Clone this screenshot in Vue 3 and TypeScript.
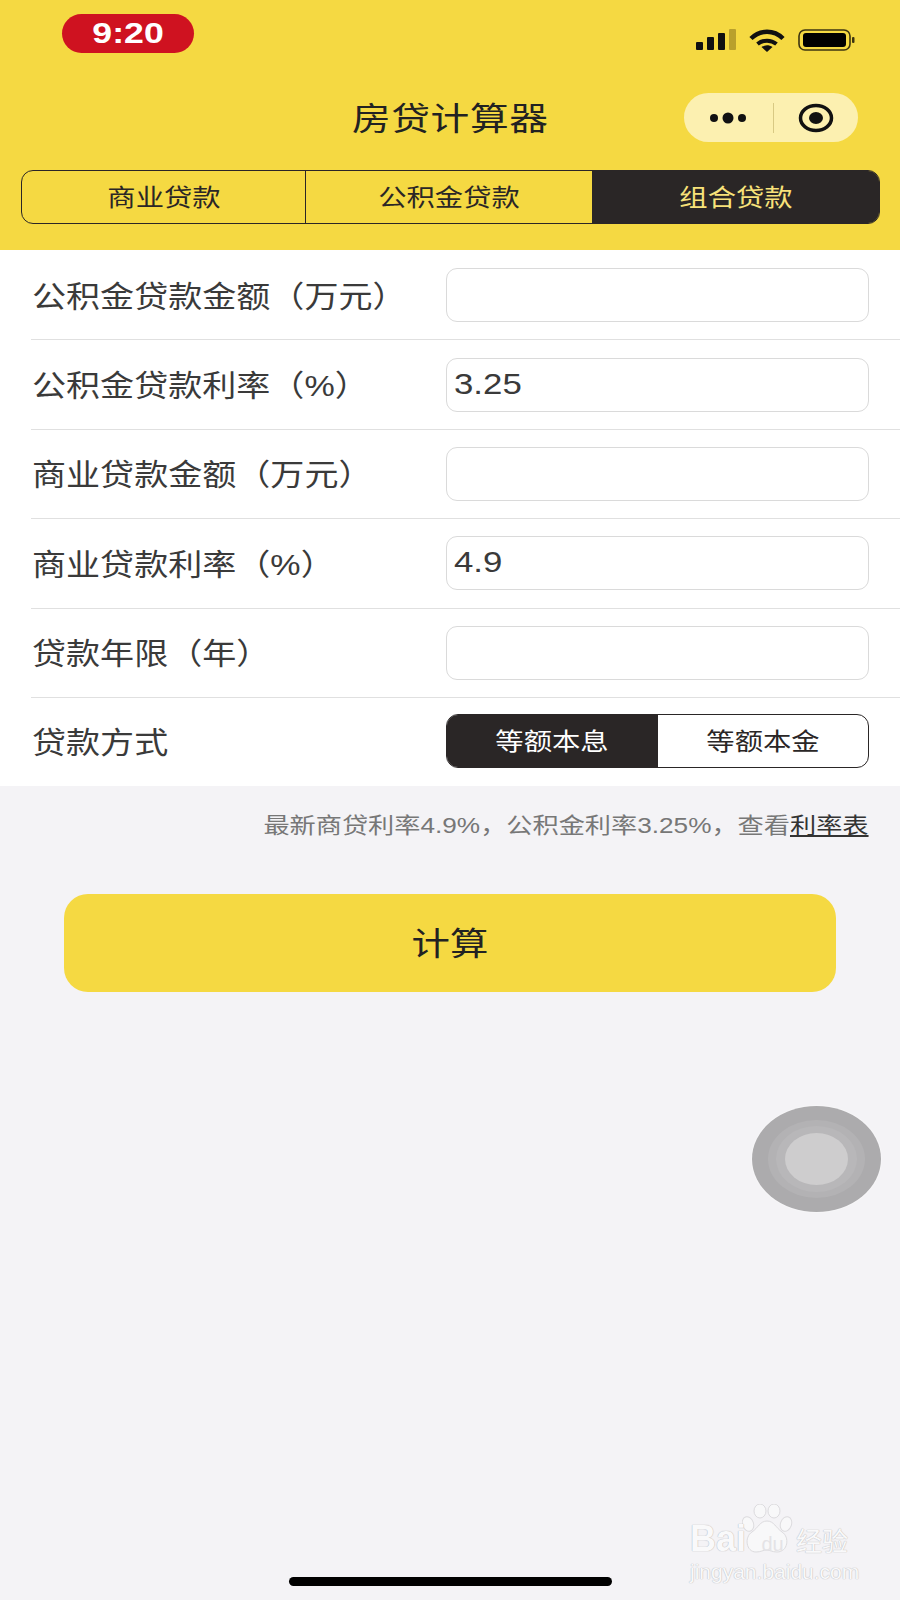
<template>
  <div class="page">
    <header class="head">
      <div class="status">
        <span class="time"><span class="wide mid">9:20</span></span>
        <div class="status-icons">
          <svg width="40" height="22" viewBox="0 0 40 22">
            <rect x="0" y="13" width="7" height="8" rx="1" fill="#111" />
            <rect x="11" y="8" width="7" height="13" rx="1" fill="#111" />
            <rect x="22" y="4" width="7" height="17" rx="1" fill="#111" />
            <rect x="33" y="0" width="7" height="21" rx="1" fill="#b9a02c" />
          </svg>
          <svg width="36" height="23" viewBox="0 0 36 23">
            <path d="M18 23 L0 8 C10 -2.500 26 -2.500 36 8 Z M18 23 L9 13 C14 8.500 22 8.500 27 13 Z" fill="none" />
            <path d="M2 9.500 C11 0.500 25 0.500 34 9.500" fill="none" stroke="#111" stroke-width="4.500" />
            <path d="M8.500 15 C14 10.500 22 10.500 27.500 15" fill="none" stroke="#111" stroke-width="4" />
            <path d="M12.500 18 C16 15.500 20 15.500 23.500 18 L18 23 Z" fill="#111" />
          </svg>
          <svg width="58" height="24" viewBox="0 0 58 24">
            <rect x="1" y="2" width="51" height="20" rx="6" fill="none" stroke="#3c3410" stroke-width="1.600" />
            <rect x="5" y="5" width="43" height="14" rx="3" fill="#000" />
            <rect x="54" y="9" width="2.500" height="6" rx="1" fill="#3c3410" />
          </svg>
        </div>
      </div>
      <div class="nav">
        <h1><span class="wide mid">房贷计算器</span></h1>
        <div class="capsule">
          <svg width="40" height="16" viewBox="0 0 40 16">
            <circle cx="6" cy="8" r="4" fill="#111" />
            <circle cx="20" cy="8" r="5.500" fill="#111" />
            <circle cx="34" cy="8" r="4" fill="#111" />
          </svg>
          <i class="sep"></i>
          <svg width="36" height="30" viewBox="0 0 36 30">
            <ellipse cx="18" cy="15" rx="15.500" ry="12.500" fill="none" stroke="#111" stroke-width="3.500" />
            <ellipse cx="18" cy="15" rx="7" ry="6" fill="#111" />
          </svg>
        </div>
      </div>
      <div class="tabs">
        <div v-for="t in tabs" :key="t" class="tab" :class="{ on: t === activeTab }">
          <span class="wide mid">{{ t }}</span>
        </div>
      </div>
    </header>

    <section class="form">
      <div v-for="r in rows" :key="r.label" class="row">
        <label><span class="wide">{{ r.label }}</span></label>
        <div class="field"><span class="wide">{{ r.value }}</span></div>
      </div>
      <div class="row last">
        <label><span class="wide">贷款方式</span></label>
        <div class="switch">
          <div class="opt on"><span class="wide mid">等额本息</span></div>
          <div class="opt"><span class="wide mid">等额本金</span></div>
        </div>
      </div>
    </section>

    <p class="note"><span class="wide end">最新商贷利率4.9%，公积金利率3.25%，查看<u>利率表</u></span></p>

    <button class="calc"><span class="wide mid">计算</span></button>

    <div class="float"><i class="r1"></i><i class="r2"></i><i class="r3"></i></div>

    <div class="mark">
      <svg class="paw" width="52" height="52" viewBox="0 0 52 52">
        <g fill="#f8f8f9" stroke="#dcdbde" stroke-width="1">
          <ellipse cx="6" cy="20" rx="5.500" ry="7.500" transform="rotate(-20 6 20)" />
          <ellipse cx="18" cy="7" rx="6" ry="7" />
          <ellipse cx="32" cy="7" rx="6" ry="7" />
          <ellipse cx="44" cy="20" rx="5.500" ry="7.500" transform="rotate(20 44 20)" />
          <path d="M25 17 C32 17 34 24 40 28 C48 33 46 48 35 48 C30 48 28 46 25 46 C21 46 19 48 14 48 C4 48 2 33 10 28 C16 24 18 17 25 17 Z" />
        </g>
      </svg>
      <div class="mark-top">
        <span>Bai</span><b>du</b><span class="cn">经验</span>
      </div>
      <div class="mark-url">jingyan.baidu.com</div>
    </div>
    <div class="home"></div>
  </div>
</template>

<script setup lang="ts">
const tabs = ['商业贷款', '公积金贷款', '组合贷款']
const activeTab = '组合贷款'

const rows = [
  { label: '公积金贷款金额（万元）', value: '' },
  { label: '公积金贷款利率（%）', value: '3.25' },
  { label: '商业贷款金额（万元）', value: '' },
  { label: '商业贷款利率（%）', value: '4.9' },
  { label: '贷款年限（年）', value: '' }
]
</script>

<style>
html, body { margin: 0; background: #f4f3f6; }
</style>

<style scoped>
.page {
  position: relative;
  width: 900px;
  height: 1600px;
  overflow: hidden;
  background: #f4f3f6;
  color: #222;
  font-family: "Liberation Sans", "Noto Sans CJK SC", sans-serif;
}
/* the screenshot is stretched sideways, so the glyphs are too */
.wide {
  display: inline-block;
  white-space: nowrap;
  transform: scaleX(1.135);
  transform-origin: left center;
}
.wide.mid { transform-origin: center; }
.wide.end { transform-origin: right center; }
.head {
  height: 250px;
  box-sizing: border-box;
  background: #f5d942;
  padding: 14px 20px 0 21px;
}
.status {
  display: flex;
  justify-content: space-between;
  height: 39px;
  padding-left: 41px;
  padding-right: 24px;
}
.time {
  width: 132px;
  height: 39px;
  line-height: 39px;
  border-radius: 20px;
  background: #cf1220;
  color: #fff;
  font-size: 29px;
  font-weight: 700;
  text-align: center;
}
.time .wide { transform: scaleX(1.23); }
.status-icons {
  display: flex;
  align-items: center;
  gap: 13px;
  height: 52px;
  margin-top: 0;
}
.nav {
  position: relative;
  height: 50px;
  margin-top: 40px;
  display: flex;
  align-items: center;
  justify-content: center;
}
.nav h1 {
  margin: 0;
  padding-bottom: 5px;
  font-size: 32px;
  font-weight: 400;
  letter-spacing: 0.5px;
  color: #222;
}
.nav h1 .wide { transform: scaleX(1.21); }
.capsule {
  position: absolute;
  right: 22px;
  top: 0;
  width: 174px;
  height: 49px;
  border-radius: 25px;
  background: #fcf0b0;
  display: flex;
  align-items: center;
  justify-content: space-between;
  box-sizing: border-box;
  padding: 0 24px 0 24px;
}
.sep {
  width: 1px;
  height: 30px;
  background: #d8c983;
}
.tabs {
  display: flex;
  height: 54px;
  margin-top: 27px;
  box-sizing: border-box;
  border: 1.5px solid #2a2626;
  border-radius: 12px;
  overflow: hidden;
}
.tab {
  flex: 1;
  display: flex;
  align-items: center;
  justify-content: center;
  padding-bottom: 3px;
  font-size: 24px;
  color: #2a2626;
  border-left: 1.5px solid #2a2626;
}
.tab:first-child {
  flex: 0 0 283px;
  border-left: 0;
}
.tab.on {
  background: #2a2626;
  color: #f8e27a;
}
.tab .wide, .opt .wide { transform: scaleX(1.18); }
.form {
  background: #fff;
  padding-left: 31px;
  padding-top: 1px;
}
.row {
  height: 89.4px;
  box-sizing: border-box;
  border-bottom: 1.5px solid #e0e0e0;
  display: flex;
  align-items: center;
  justify-content: space-between;
  padding-right: 31px;
}
.row.last {
  height: 88.4px;
  border-bottom: 0;
  padding-bottom: 2px;
}
.row label {
  margin-left: 1px;
  padding-bottom: 3px;
  font-size: 30px;
  color: #3a3a3a;
}
.field {
  width: 423px;
  height: 54px;
  box-sizing: border-box;
  border: 1.5px solid #dadada;
  border-radius: 11px;
  padding-left: 7px;
  line-height: 49px;
  font-size: 30px;
  color: #3a3a3a;
}
.field .wide { transform: scaleX(1.16); }
.switch {
  width: 423px;
  height: 54px;
  box-sizing: border-box;
  display: flex;
  border: 1.5px solid #2a2626;
  border-radius: 12px;
  overflow: hidden;
}
.opt {
  flex: 1;
  display: flex;
  align-items: center;
  justify-content: center;
  padding-bottom: 3px;
  font-size: 24px;
  color: #2a2626;
}
.opt.on {
  background: #2a2626;
  color: #fff;
}
.note {
  margin: 0;
  padding: 25px 31px 0 0;
  text-align: right;
  font-size: 22px;
  line-height: 30px;
  color: #777;
}
.note .wide { transform: scaleX(1.19); }
.note u { color: #333; }
.calc {
  display: block;
  width: 772px;
  height: 98px;
  margin: 53px 0 0 64px;
  padding: 0 0 5px;
  border: 0;
  border-radius: 24px;
  background: #f5d942;
  color: #222;
  font-family: inherit;
  font-size: 32px;
}
.calc .wide { transform: scaleX(1.2); }
.float {
  position: absolute;
  left: 752px;
  top: 1106px;
  width: 129px;
  height: 106px;
  border-radius: 50%;
  background: #acabad;
  box-shadow: 0 0 2px #fff;
}
.float i {
  position: absolute;
  border-radius: 50%;
}
.r1 { left: 16px; top: 14px; width: 97px; height: 78px; background: #b3b2b4; }
.r2 { left: 24px; top: 20px; width: 81px; height: 66px; background: #b8b7b9; }
.r3 { left: 33px; top: 27px; width: 63px; height: 52px; background: #cecdce; }
.mark {
  position: absolute;
  left: 690px;
  top: 1503px;
  width: 170px;
  height: 80px;
  color: #f9f9fa;
  text-shadow: 0 0 1px #bdbcbf, 0 0 1px #bdbcbf;
}
.paw {
  position: absolute;
  left: 52px;
  top: 1px;
}
.mark-top {
  position: relative;
  display: flex;
  align-items: baseline;
  height: 32px;
  padding-top: 20px;
  font-size: 36px;
  font-weight: 700;
  line-height: 32px;
}
.mark-top b {
  width: 50px;
  padding-left: 3px;
  box-sizing: border-box;
  font-size: 20px;
  font-weight: 400;
  color: #e4e3e6;
  text-shadow: none;
  text-align: center;
}
.mark-top .cn {
  font-size: 26px;
  font-weight: 400;
}
.mark-url {
  margin-top: 5px;
  font-size: 21px;
  line-height: 24px;
  white-space: nowrap;
}
.home {
  position: absolute;
  left: 289px;
  top: 1577px;
  width: 323px;
  height: 9px;
  border-radius: 5px;
  background: #000;
}
</style>
